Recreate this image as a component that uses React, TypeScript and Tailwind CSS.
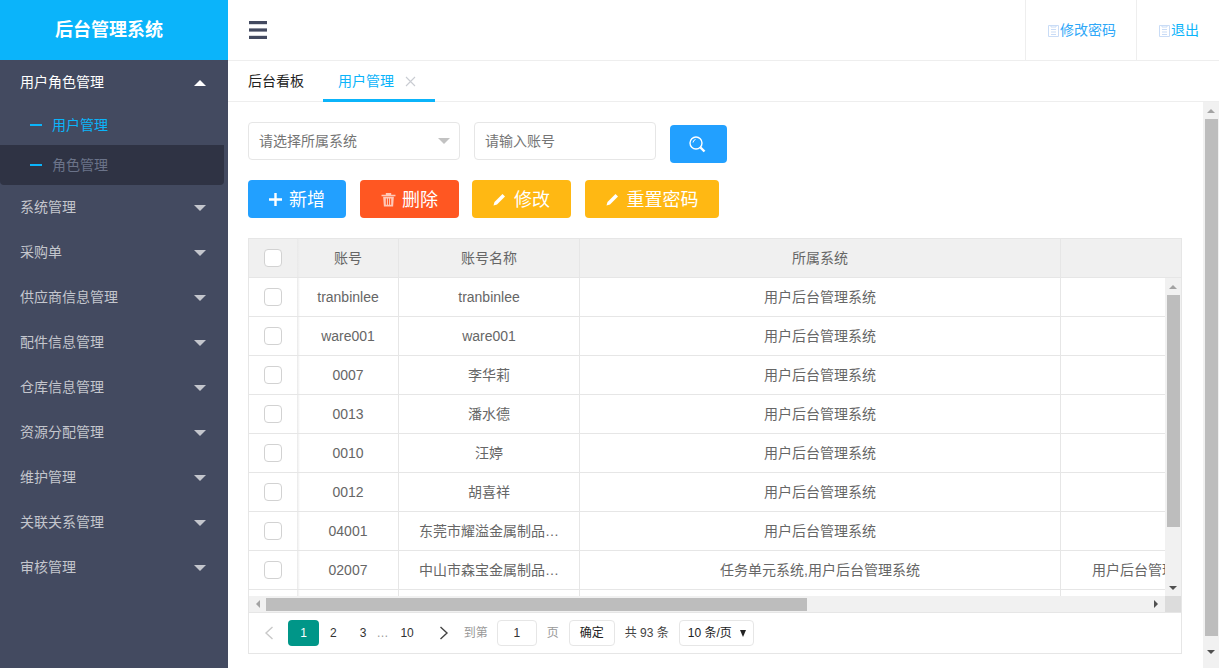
import React from "react";

const font = { fontFamily: '"Liberation Sans","Noto Sans CJK SC",sans-serif' };

const Up = ({ className = "" }: { className?: string }) => (
  <svg width="12" height="6" viewBox="0 0 12 6" className={className}><path d="M6 0L12 6H0z" fill="currentColor" /></svg>
);
const Down = ({ className = "" }: { className?: string }) => (
  <svg width="12" height="6" viewBox="0 0 12 6" className={className}><path d="M0 0H12L6 6z" fill="currentColor" /></svg>
);

const menus = ["系统管理", "采购单", "供应商信息管理", "配件信息管理", "仓库信息管理", "资源分配管理", "维护管理", "关联关系管理", "审核管理"];

function Sidebar() {
  return (
    <aside className="w-[228px] shrink-0 bg-[#434a60] h-full">
      <div className="h-[60px] bg-[#0bb4fa] flex items-center justify-center pr-[10px] text-white text-[18px] font-bold">后台管理系统</div>
      <div className="h-[45px] flex items-center justify-between pl-5 pr-[22px] text-white text-sm">
        <span className="pb-0.5">用户角色管理</span>
        <Up />
      </div>
      <div className="h-10 flex items-center pl-[30px] text-sm text-[#0bb4fa]">
        <span className="w-3 h-0.5 bg-[#0bb4fa] mr-[10px]" />用户管理
      </div>
      <div className="h-10 w-[224px] rounded-b-sm flex items-center pl-[30px] text-sm text-[#6b7389] bg-[#2f3344]">
        <span className="w-3 h-0.5 bg-[#0bb4fa] mr-[10px]" />角色管理
      </div>
      {menus.map((m) => (
        <div key={m} className="h-[45px] flex items-center justify-between pl-5 pr-[22px] text-[#c4c6cd] text-sm">
          <span className="pb-0.5">{m}</span>
          <Down />
        </div>
      ))}
    </aside>
  );
}

const DocIcon = () => (
  <svg width="13" height="13" viewBox="0 0 13 13" fill="none" stroke="#c9dcf6" strokeWidth="1">
    <path d="M1.5 1.5H11.5V12.5H1.5z" />
    <path d="M4 1V3H9V1M4 5.5H9M4 8H9M4 10.5H9" />
  </svg>
);

function TopBar() {
  return (
    <header className="h-[61px] shrink-0 border-b border-[#eeeeee] flex items-stretch">
      <div className="flex-1 flex items-center pl-[21px]">
        <svg width="18" height="18" viewBox="0 0 18 18" fill="#434a60">
          <rect x="0" y="0" width="18" height="3.2" />
          <rect x="0" y="7.4" width="18" height="3.2" />
          <rect x="0" y="14.8" width="18" height="3.2" />
        </svg>
      </div>
      <div className="w-[111px] border-l border-[#eeeeee] flex items-center pl-[21px] text-sm text-[#2ea8f8]"><DocIcon />修改密码</div>
      <div className="w-[83px] border-l border-[#eeeeee] flex items-center pl-[21px] text-sm text-[#0bb4fa]"><DocIcon />退出</div>
    </header>
  );
}

function Tabs() {
  return (
    <div className="h-[41px] shrink-0 border-b border-[#eeeeee] flex items-stretch pl-5 text-sm">
      <div className="flex items-center text-[#222222] w-[75px] pb-px">后台看板</div>
      <div className="w-[112px] h-[41px] border-b-[3px] border-[#0bb4fa] flex items-center pl-[15px] pt-0.5 text-[#0bb4fa]">
        用户管理
        <svg width="11" height="11" viewBox="0 0 11 11" className="ml-[11px]" stroke="#c9ccd2" strokeWidth="1.1"><path d="M1 1L10 10M10 1L1 10" /></svg>
      </div>
    </div>
  );
}

const Trash = () => (
  <svg width="15" height="15" viewBox="0 0 14 14" className="mr-[6px]" fill="#ffc9b8">
    <path d="M0.5 2.5H13.5V4H0.5zM4.5 1H9.5V2.5H4.5z" />
    <path fillRule="evenodd" d="M2 4.5H12L11.3 13.5H2.7zM4.5 6V12H5.5V6zM6.5 6V12H7.5V6zM8.5 6V12H9.5V6z" />
  </svg>
);
const Pencil = () => (
  <svg width="13" height="13" viewBox="0 0 13 13" className="mr-2" fill="#fff">
    <path d="M0.5 12.5L1.5 9L9.5 1L12 3.5L4 11.5z" />
  </svg>
);
const Plus = () => (
  <svg width="13" height="13" viewBox="0 0 13 13" className="mr-[7px]" fill="#fff">
    <path d="M5.3 0H7.7V5.3H13V7.7H7.7V13H5.3V7.7H0V5.3H5.3z" />
  </svg>
);

function Toolbar() {
  return (
    <>
      <div className="flex items-start h-[58px]">
        <div className="w-[212px] h-[38px] border border-[#e6e6e6] rounded-sm flex items-center justify-between pl-[10px] pr-[9px] text-sm text-[#757575]">
          请选择所属系统
          <Down className="text-[#c2c2c2]" />
        </div>
        <div className="w-[182px] h-[38px] ml-[14px] border border-[#e6e6e6] rounded-sm flex items-center pl-[10px] text-sm text-[#757575]">请输入账号</div>
        <div className="w-[57px] h-[38px] ml-[14px] mt-[3px] bg-[#22a0ff] rounded-sm flex items-center justify-center pr-0.5">
          <svg width="17" height="17" viewBox="0 0 17 17" fill="none" stroke="#fff">
            <circle cx="7" cy="7" r="6" strokeWidth="1.4" />
            <path d="M6.5 3.5A3.5 3.5 0 0 0 4 6.5" strokeWidth="1" />
            <path d="M11.5 11.5L15.5 15.5" strokeWidth="2.4" />
          </svg>
        </div>
      </div>
      <div className="flex h-[38px] text-[18px] text-white">
        <div className="w-[98px] bg-[#22a0ff] rounded-sm flex items-center justify-center"><Plus /><span className="mt-0.5">新增</span></div>
        <div className="w-[99px] ml-[14px] bg-[#ff5722] rounded-sm flex items-center justify-center"><Trash /><span className="mt-0.5">删除</span></div>
        <div className="w-[99px] ml-[13px] bg-[#ffb813] rounded-sm flex items-center justify-center"><Pencil /><span className="mt-0.5">修改</span></div>
        <div className="w-[134px] ml-[14px] bg-[#ffb813] rounded-sm flex items-center justify-center"><Pencil /><span className="mt-0.5">重置密码</span></div>
      </div>
    </>
  );
}

const Check = () => <span className="block w-[18px] h-[18px] bg-white border border-[#d2d2d2] rounded-sm" />;

const rows = [
  ["tranbinlee", "tranbinlee", "用户后台管理系统", ""],
  ["ware001", "ware001", "用户后台管理系统", ""],
  ["0007", "李华莉", "用户后台管理系统", ""],
  ["0013", "潘水德", "用户后台管理系统", ""],
  ["0010", "汪婷", "用户后台管理系统", ""],
  ["0012", "胡喜祥", "用户后台管理系统", ""],
  ["04001", "东莞市耀溢金属制品…", "用户后台管理系统", ""],
  ["02007", "中山市森宝金属制品…", "任务单元系统,用户后台管理系统", "用户后台管理系统"],
];

const cell = "shrink-0 h-full border-r border-[#e6e6e6] flex items-center justify-center whitespace-nowrap overflow-hidden";
const fade = "relative z-10 w-[48px] shrink-0 flex items-center justify-center";

function Shade() {
  return <div className="w-[3px] shrink-0 -mr-[2px] h-full bg-gradient-to-r from-[#e9e9e9] to-transparent relative z-10" />;
}

function Row({ r }: { r: string[] }) {
  return (
    <div className="h-[39px] shrink-0 flex border-b border-[#e6e6e6] text-sm text-[#666666]">
      <div className={`${fade} h-full bg-white`}><Check /></div>
      <Shade />
      <div className={`${cell} w-[101px]`}>{r[0]}</div>
      <div className={`${cell} w-[181px]`}>{r[1]}</div>
      <div className={`${cell} w-[481px]`}>{r[2]}</div>
      <div className="shrink-0 w-[174px] flex items-center justify-center whitespace-nowrap">{r[3]}</div>
    </div>
  );
}

function DataTable() {
  return (
    <div className="mt-5 w-[934px] border border-[#e6e6e6] text-sm text-[#666666]">
      <div className="h-[39px] flex bg-[#f0f0f0] border-b border-[#e6e6e6] overflow-hidden">
        <div className={`${fade} bg-[#f0f0f0]`}><Check /></div>
        <Shade />
        <div className={`${cell} w-[101px]`}>账号</div>
        <div className={`${cell} w-[181px]`}>账号名称</div>
        <div className={`${cell} w-[481px]`}>所属系统</div>
        <div className="flex-1" />
      </div>
      <div className="h-[318px] flex">
        <div className="w-[916px] flex flex-col overflow-hidden">
          {rows.map((r) => <Row key={r[0]} r={r} />)}
          <div className="h-[20px] shrink-0 flex">
            <div className={`${fade} h-full bg-white`} />
            <Shade />
            <div className={`${cell} w-[101px]`} />
            <div className={`${cell} w-[181px]`} />
            <div className={`${cell} w-[481px]`} />
          </div>
        </div>
        <div className="w-4 bg-[#f1f1f1] flex flex-col items-center">
          <div className="h-[17px] flex items-center justify-center text-[#a3a3a3]"><Up className="w-2 h-1" /></div>
          <div className="w-[13px] flex-1 bg-[#bdbdbd] mb-[69px]" />
          <div className="h-[17px] -mt-[17px] flex items-center justify-center text-[#505050]"><Down className="w-2 h-1" /></div>
        </div>
      </div>
      <div className="h-4 flex bg-[#f1f1f1]">
        <div className="w-[916px] flex items-center">
          <div className="w-[17px] flex justify-center text-[#a3a3a3]"><svg width="4" height="8" viewBox="0 0 4 8"><path d="M4 0V8L0 4z" fill="currentColor" /></svg></div>
          <div className="w-[541px] h-[13px] bg-[#bdbdbd]" />
          <div className="flex-1 flex justify-end pr-[7px] text-[#505050]"><svg width="4" height="8" viewBox="0 0 4 8"><path d="M0 0V8L4 4z" fill="currentColor" /></svg></div>
        </div>
        <div className="w-4 bg-[#dcdcdc]" />
      </div>
      <div className="h-[41px] border-t border-[#e6e6e6] flex items-center text-xs text-[#333333] pl-[15px]">
        <svg width="10" height="14" viewBox="0 0 10 14" fill="none" stroke="#c9c9c9" strokeWidth="1.4"><path d="M8.5 1L2 7L8.5 13" /></svg>
        <div className="w-[31px] h-[26px] ml-[14px] bg-[#009688] rounded-sm text-white flex items-center justify-center">1</div>
        <span className="ml-[11px]">2</span>
        <span className="ml-[23px]">3</span>
        <span className="ml-[10px] text-[#999999]">…</span>
        <span className="ml-[12px]">10</span>
        <svg width="10" height="14" viewBox="0 0 10 14" fill="none" stroke="#444444" strokeWidth="1.4" className="ml-[25px]"><path d="M1.5 1L8 7L1.5 13" /></svg>
        <span className="ml-[15px] text-[#999999]">到第</span>
        <div className="w-10 h-[26px] ml-[9px] border border-[#e6e6e6] rounded-sm flex items-center justify-center text-[#333333]">1</div>
        <span className="ml-[10px] text-[#999999]">页</span>
        <div className="w-[46px] h-[26px] ml-[10px] border border-[#e6e6e6] rounded-sm flex items-center justify-center text-[#222222]">确定</div>
        <span className="ml-[10px] text-[#444444]">共 93 条</span>
        <div className="w-[75px] h-[26px] ml-[10px] border border-[#e6e6e6] rounded-sm flex items-center justify-between pl-2 pr-[7px] text-[#222222]">
          10 条/页
          <svg width="6" height="7" viewBox="0 0 6 7"><path d="M0 0H6L3 7z" fill="#222222" /></svg>
        </div>
      </div>
    </div>
  );
}

export default function App() {
  return (
    <div className="flex h-screen w-full overflow-hidden bg-white" style={font}>
      <Sidebar />
      <main className="flex-1 min-w-0 flex flex-col">
        <TopBar />
        <Tabs />
        <div className="flex-1 min-h-0 flex">
          <div className="flex-1 min-w-0 pt-5 pl-5">
            <Toolbar />
            <DataTable />
          </div>
          <div className="w-4 bg-[#f1f1f1] flex flex-col items-center">
            <div className="h-[17px] flex items-center justify-center text-[#a3a3a3]"><Up className="w-2 h-1" /></div>
            <div className="w-[13px] h-[517px] bg-[#bdbdbd]" />
            <div className="flex-1 flex items-center justify-center text-[#505050]"><Down className="w-2 h-1" /></div>
          </div>
        </div>
      </main>
    </div>
  );
}
